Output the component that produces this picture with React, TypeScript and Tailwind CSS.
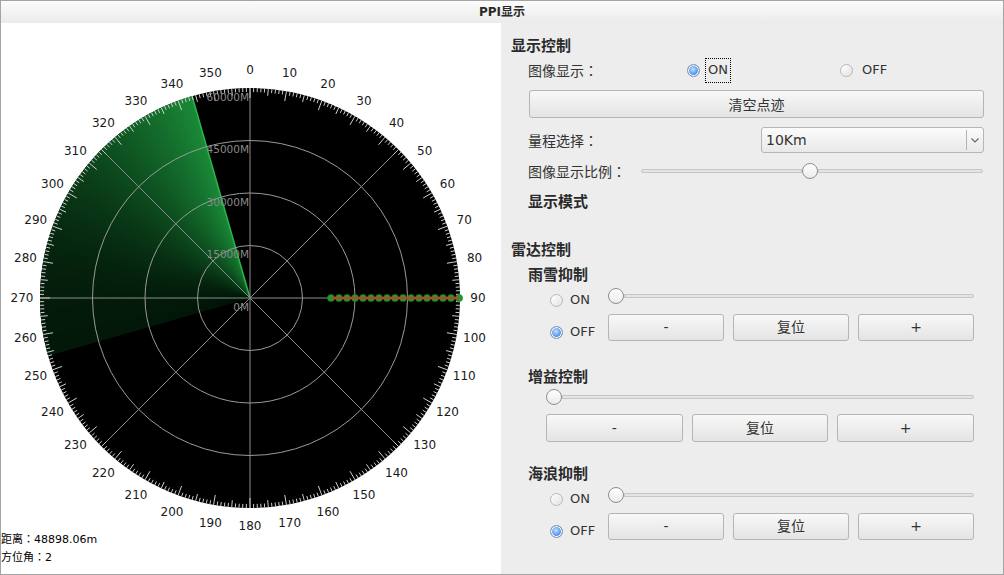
import React from "react";

// PPI 雷达显示界面

const CX = 250;
const CY = 298;
const R = 210;

const pt = (deg: number, r: number): [number, number] => {
  const a = (deg * Math.PI) / 180;
  return [CX + r * Math.sin(a), CY - r * Math.cos(a)];
};

const CJK = "font-['Noto_Sans_CJK_SC','DejaVu_Sans',sans-serif]";

// 全角冒号（居中显示）
function Colon() {
  return <span className="font-['Noto_Sans_CJK_JP',sans-serif]">：</span>;
}

function Radar() {
  // 扫描扇区：254° -> 344°
  const wedges = Array.from({ length: 90 }, (_, i) => {
    const b0 = 254 + i;
    const b1 = Math.min(b0 + 1.4, 344);
    const t = Math.pow((i + 1) / 90, 2);
    const color = `rgb(${Math.round(3 + 22 * t)},${Math.round(24 + 112 * t)},${Math.round(9 + 46 * t)})`;
    const [x0, y0] = pt(b0, R);
    const [x1, y1] = pt(b1, R);
    return (
      <path
        key={i}
        d={`M${CX} ${CY} L${x0} ${y0} A${R} ${R} 0 0 1 ${x1} ${y1} Z`}
        fill={color}
      />
    );
  });

  const ticks = Array.from({ length: 360 }, (_, d) => {
    const len = d % 10 === 0 ? 10 : d % 5 === 0 ? 7 : 4;
    const [x0, y0] = pt(d, R);
    const [x1, y1] = pt(d, R - len);
    return <line key={d} x1={x0} y1={y0} x2={x1} y2={y1} stroke="#cfcfcf" strokeWidth={1} />;
  });

  const labels = Array.from({ length: 36 }, (_, i) => {
    const d = i * 10;
    const [x, y] = pt(d, 228);
    return (
      <text key={d} x={x} y={y} fontSize={12} fill="#1a1a1a" textAnchor="middle" dominantBaseline="central">
        {d}
      </text>
    );
  });

  const rings = [52.5, 105, 157.5];
  const ranges = ["0M", "15000M", "30000M", "45000M", "60000M"];
  const [sx, sy] = pt(344, R);

  const dots = Array.from({ length: 17 }, (_, k) => 331 + k * 8);

  return (
    <svg
      width={500}
      height={507}
      viewBox="1 23 500 507"
      overflow="visible"
      fontFamily="DejaVu Sans, sans-serif"
    >
      <circle cx={CX} cy={CY} r={R} fill="#000" />
      {wedges}
      <line x1={CX} y1={CY} x2={sx} y2={sy} stroke="#2bb84a" strokeWidth={1.5} />
      {rings.map(r => (
        <circle key={r} cx={CX} cy={CY} r={r} fill="none" stroke="#9a9a9a" strokeWidth={1} />
      ))}
      {[0, 45, 90, 135].map(d => {
        const [x0, y0] = pt(d, R);
        const [x1, y1] = pt(d + 180, R);
        return <line key={d} x1={x0} y1={y0} x2={x1} y2={y1} stroke="#8c8c8c" strokeWidth={1} />;
      })}
      {ticks}
      {ranges.map((t, i) => (
        <text
          key={t}
          x={249}
          y={CY - i * 52.5 + 8.5}
          fontSize={10.5}
          fill="#8a8a8a"
          textAnchor="end"
          dominantBaseline="central"
        >
          {t}
        </text>
      ))}
      {dots.map(x => (
        <circle key={x} cx={x} cy={CY} r={3.6} fill="#1c9c2c" stroke="#127a1e" strokeWidth={0.6} />
      ))}
      <line x1={331} y1={CY} x2={459} y2={CY} stroke="#e0302a" strokeWidth={2} />
      {labels}
    </svg>
  );
}

function Radio({ checked }: { checked?: boolean }) {
  return checked ? (
    <span className="w-[13px] h-[13px] rounded-full border border-[#7d93b2] bg-[radial-gradient(circle_at_45%_40%,#c4e0ff_0%,#5d9cec_50%,#2f6fc7_100%)] shadow-[inset_0_0_0_1px_#ffffff] shrink-0" />
  ) : (
    <span className="w-[13px] h-[13px] rounded-full border border-[#b8b8b8] bg-[linear-gradient(135deg,#ffffff,#e2e2e2)] shrink-0" />
  );
}

function Slider({ width, thumbLeft }: { width: number; thumbLeft: number }) {
  return (
    <div className="flex items-center h-[18px]" style={{ width }}>
      {thumbLeft > 0 && (
        <div className="h-[4px] rounded-l-full border border-[#c6c6c6] bg-[#e4e4e4]" style={{ width: thumbLeft }} />
      )}
      <div className="w-[16px] h-[16px] rounded-full border border-[#8e8e8e] bg-gradient-to-b from-[#ffffff] to-[#ebebeb] shrink-0" />
      <div className="flex-1 h-[4px] rounded-r-full border border-[#c6c6c6] bg-[#e4e4e4]" />
    </div>
  );
}

function Btn({ children, className = "" }: { children: React.ReactNode; className?: string }) {
  return (
    <button
      className={`flex-1 flex items-center justify-center rounded-[3px] border border-[#b5b5b5] bg-gradient-to-b from-[#f8f8f8] to-[#e4e4e4] text-[14px] text-[#333] ${className}`}
    >
      {children}
    </button>
  );
}

function ButtonRow({ className }: { className: string }) {
  return (
    <div className={`flex gap-[9px] ${className}`}>
      <Btn>-</Btn>
      <Btn>复位</Btn>
      <Btn>+</Btn>
    </div>
  );
}

function OnOffBlock() {
  return (
    <div className="flex mt-[3px]">
      <div className="ml-[39px] w-[58px] flex flex-col text-[13px] text-[#333]">
        <div className="mt-[3px] h-[20px] flex items-center gap-[7px]">
          <Radio />
          <span>ON</span>
        </div>
        <div className="mt-[12px] h-[20px] flex items-center gap-[7px]">
          <Radio checked />
          <span>OFF</span>
        </div>
      </div>
      <div className="w-[366px] flex flex-col">
        <Slider width={366} thumbLeft={0} />
        <ButtonRow className="mt-[9px] h-[27px]" />
      </div>
    </div>
  );
}

export default function App() {
  return (
    <div className="w-[1004px] h-[575px] border border-[#a4a4a4] flex flex-col bg-[#ededed] font-['DejaVu_Sans','Noto_Sans_CJK_SC',sans-serif] text-[#333]">
      {/* 标题栏 */}
      <div className="h-[22px] shrink-0 flex items-center justify-center bg-gradient-to-b from-[#fcfcfc] to-[#ebebeb] text-[12px] font-bold text-[#2a2a2a]">
        PPI显示
      </div>

      <div className="flex flex-1">
        {/* 雷达画面 */}
        <div className="w-[500px] bg-white flex flex-col">
          <Radar />
          <div className="text-[11px] leading-[16px] text-black">
            <div>
              <span className={CJK}>距离</span>
              <Colon />
              48898.06m
            </div>
            <div>
              <span className={CJK}>方位角</span>
              <Colon />2
            </div>
          </div>
        </div>

        {/* 控制面板 */}
        <div className="flex-1 flex flex-col pl-[10px] pt-[12px] text-[14px]">
          <div className={`h-[20px] flex items-center text-[15px] font-bold text-[#2a2a2a] ${CJK}`}>显示控制</div>

          <div className="mt-[5px] h-[20px] flex items-center pl-[17px]">
            <span className={`w-[159px] ${CJK}`}>
              图像显示<Colon />
            </span>
            <div className="w-[153px] flex items-center gap-[5px]">
              <Radio checked />
              <span className="h-[25px] flex items-center px-[2px] border border-dotted border-black text-[13px]">ON</span>
            </div>
            <div className="flex items-center gap-[9px]">
              <Radio />
              <span className="text-[13px]">OFF</span>
            </div>
          </div>

          <button className={`mt-[10px] ml-[18px] w-[455px] h-[28px] rounded-[3px] border border-[#b5b5b5] bg-gradient-to-b from-[#f8f8f8] to-[#e4e4e4] text-[14px] text-[#333] ${CJK}`}>
            清空点迹
          </button>

          <div className="mt-[9px] h-[26px] flex items-center pl-[17px]">
            <span className={`w-[233px] ${CJK}`}>
              量程选择<Colon />
            </span>
            <div className="w-[223px] h-[26px] flex items-center rounded-[3px] border border-[#b5b5b5] bg-gradient-to-b from-[#fbfbfb] to-[#e9e9e9]">
              <span className="flex-1 pl-[4px] text-[14px]">10Km</span>
              <span className="w-px h-[20px] bg-[#b4b4b4]" />
              <span className="w-[16px] flex items-center justify-center">
                <svg width="8" height="5" viewBox="0 0 8 5">
                  <path d="M0.5 0.5 L4 4 L7.5 0.5" fill="none" stroke="#666" strokeWidth="1.1" />
                </svg>
              </span>
            </div>
          </div>

          <div className="mt-[8px] h-[20px] flex items-center pl-[17px]">
            <span className={`w-[113px] ${CJK}`}>
              图像显示比例<Colon />
            </span>
            <Slider width={342} thumbLeft={161} />
          </div>

          <div className={`mt-[10px] h-[20px] flex items-center pl-[17px] text-[15px] font-bold text-[#2a2a2a] ${CJK}`}>显示模式</div>

          <div className={`mt-[28px] h-[20px] flex items-center text-[15px] font-bold text-[#2a2a2a] ${CJK}`}>雷达控制</div>
          <div className={`mt-[5px] h-[20px] flex items-center pl-[17px] text-[15px] font-bold text-[#2a2a2a] ${CJK}`}>雨雪抑制</div>
          <OnOffBlock />

          <div className={`mt-[24px] h-[20px] flex items-center pl-[17px] text-[15px] font-bold text-[#2a2a2a] ${CJK}`}>增益控制</div>
          <div className="mt-[2px] ml-[35px]">
            <Slider width={428} thumbLeft={0} />
          </div>
          <ButtonRow className="mt-[8px] ml-[35px] w-[428px] h-[28px]" />

          <div className={`mt-[21px] h-[20px] flex items-center pl-[17px] text-[15px] font-bold text-[#2a2a2a] ${CJK}`}>海浪抑制</div>
          <OnOffBlock />
        </div>
      </div>
    </div>
  );
}
